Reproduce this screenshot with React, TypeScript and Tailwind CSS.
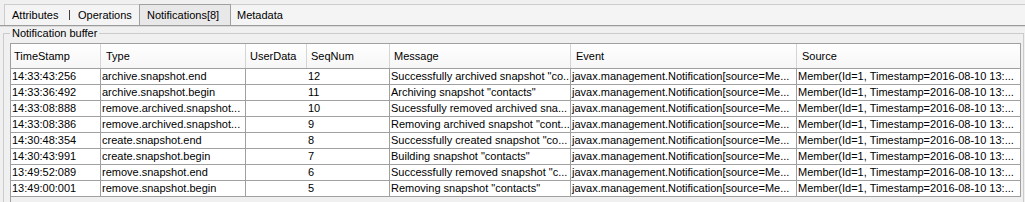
import React from 'react';

// Panel de notificaciones JMX: pestañas arriba, grupo "Notification buffer"
// con la tabla de notificaciones recibidas.

type Row = {
  time: string;
  type: string;
  userData: string;
  seq: string;
  message: string;
};

const EVENT = 'javax.management.Notification[source=Me...';
const SOURCE = 'Member(Id=1, Timestamp=2016-08-10 13:...';

const ROWS: Row[] = [
  { time: '14:33:43:256', type: 'archive.snapshot.end', userData: '', seq: '12', message: 'Successfully archived snapshot "co...' },
  { time: '14:33:36:492', type: 'archive.snapshot.begin', userData: '', seq: '11', message: 'Archiving snapshot "contacts"' },
  { time: '14:33:08:888', type: 'remove.archived.snapshot...', userData: '', seq: '10', message: 'Sucessfully removed archived sna...' },
  { time: '14:33:08:386', type: 'remove.archived.snapshot...', userData: '', seq: '9', message: 'Removing archived snapshot "cont...' },
  { time: '14:30:48:354', type: 'create.snapshot.end', userData: '', seq: '8', message: 'Successfully created snapshot "co...' },
  { time: '14:30:43:991', type: 'create.snapshot.begin', userData: '', seq: '7', message: 'Building snapshot "contacts"' },
  { time: '13:49:52:089', type: 'remove.snapshot.end', userData: '', seq: '6', message: 'Successfully removed snapshot "c...' },
  { time: '13:49:00:001', type: 'remove.snapshot.begin', userData: '', seq: '5', message: 'Removing snapshot "contacts"' },
];

// Anchos de columna en px (incluyen el borde derecho de cada celda).
const COLS = [
  { title: 'TimeStamp', w: 'w-[90px]', hp: 'pl-[3px]' },
  { title: 'Type', w: 'w-[145px]', hp: 'pl-[5px]' },
  { title: 'UserData', w: 'w-[61px]', hp: 'pl-[4px]' },
  { title: 'SeqNum', w: 'w-[83px]', hp: 'pl-[4px]' },
  { title: 'Message', w: 'w-[181px]', hp: 'pl-[4px]' },
  { title: 'Event', w: 'w-[226px]', hp: 'pl-[5px]' },
  { title: 'Source', w: 'w-[224px]', hp: 'pl-[5px]' },
];

function Cell({ w, children }: { w: string; children?: React.ReactNode }) {
  return (
    <div className={`${w} shrink-0 overflow-hidden whitespace-nowrap border-r border-[#a0a0a0] pl-[1px]`}>
      {children}
    </div>
  );
}

export default function App() {
  return (
    <div
      className="h-[202px] w-[1025px] overflow-hidden bg-[#f0f0f0] text-[11px] text-black"
      style={{ fontFamily: '"Liberation Sans", Arial, sans-serif' }}
    >
      {/* Pestañas */}
      <div className="mt-[4px] ml-[4px] flex h-[21px] items-stretch border-t border-l border-[#cdcdcd] bg-[#f4f4f4]">
        <div className="flex w-[64px] items-center pl-[7px]">Attributes</div>
        <div className="my-[5px] w-px bg-[#404040]" />
        <div className="flex w-[69px] items-center pl-[8px]">Operations</div>
        <div className="-mt-px flex h-[21px] w-[92px] items-center border-x border-t border-[#a0a0a0] bg-[#e8e8e8] pl-[7px]">
          Notifications[8]
        </div>
        <div className="flex items-center pl-[6px]">Metadata</div>
      </div>
      <div className="h-px bg-[#9c9c9c]" />
      <div className="h-px bg-[#dadada]" />

      {/* Grupo "Notification buffer" */}
      <fieldset className="ml-[3px] h-[200px] w-[1021px] border border-[#cbcbcb] pt-[3px] pr-[2px] pl-[6px]">
        <legend className="px-[2px] leading-[13px]">Notification buffer</legend>

        <div className="h-[160px] w-[1011px] border-l border-t border-[#a0a0a0] bg-[#f0f0f0]">
          {/* Cabecera */}
          <div className="flex h-[25px] border-b border-[#a0a0a0] bg-gradient-to-b from-white to-[#f6f6f6]">
            {COLS.map((c, i) => (
              <div
                key={c.title}
                className={`${c.w} ${c.hp} flex shrink-0 items-center whitespace-nowrap border-r ${
                  i === COLS.length - 1 ? 'border-[#a0a0a0]' : 'border-[#d5d5d5]'
                }`}
              >
                {c.title}
              </div>
            ))}
          </div>

          {/* Filas */}
          {ROWS.map((r) => (
            <div key={r.time} className="flex h-[16px] items-center border-b border-[#a0a0a0] bg-white leading-[15px]">
              <Cell w="w-[90px]">{r.time}</Cell>
              <Cell w="w-[145px]">{r.type}</Cell>
              <Cell w="w-[61px]">{r.userData}</Cell>
              <Cell w="w-[83px]">{r.seq}</Cell>
              <Cell w="w-[181px]">{r.message}</Cell>
              <Cell w="w-[226px]">{EVENT}</Cell>
              <Cell w="w-[224px]">{SOURCE}</Cell>
            </div>
          ))}
        </div>
      </fieldset>
    </div>
  );
}
